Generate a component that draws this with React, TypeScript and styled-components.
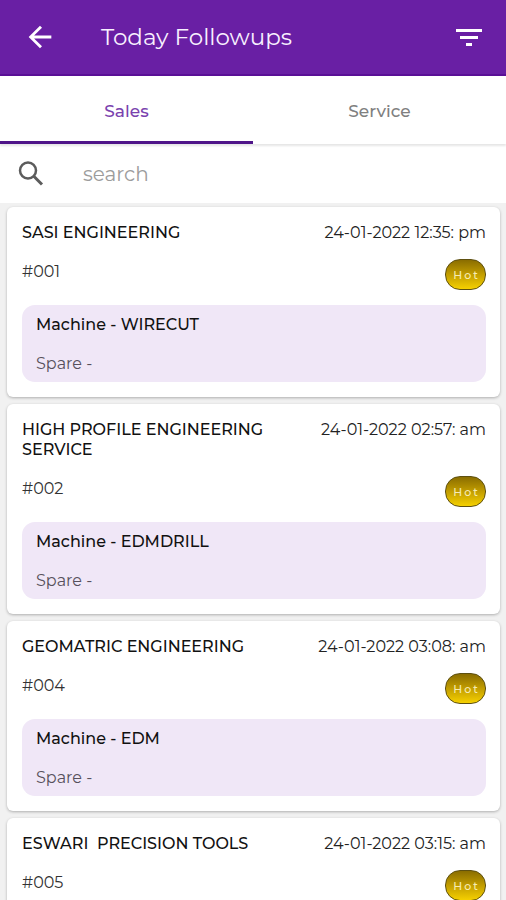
import React, { useState } from "react";
import styled, { createGlobalStyle } from "styled-components";

const GlobalStyle = createGlobalStyle`
  *, *::before, *::after { box-sizing: border-box; }
  body {
    margin: 0;
    background: #f1f1f1;
    font-family: Montserrat, Inter, "Liberation Sans", sans-serif;
    color: #111;
  }
  h1, h2, p, ul { margin: 0; padding: 0; }
  button, input { font: inherit; }
`;

const Screen = styled.div`
  display: flex;
  flex-direction: column;
  height: 100vh;
`;

const AppBar = styled.header`
  display: flex;
  flex: none;
  align-items: center;
  height: 76px;
  padding: 0 19px 0 22px;
  background: #691fa4;
  border-bottom: 2px solid #5a0f96;
`;

const IconButton = styled.button`
  display: flex;
  align-items: center;
  justify-content: center;
  width: 36px;
  height: 36px;
  padding: 0;
  border: 0;
  background: none;
  color: #fff;
  cursor: pointer;
`;

const Title = styled.h1`
  flex: 1;
  padding-left: 43px;
  font-size: 23px;
  font-weight: 400;
  line-height: 32px;
  color: #f8f0ff;
`;

const Tabs = styled.div`
  display: grid;
  flex: none;
  grid-template-columns: 1fr 1fr;
  height: 68px;
  background: #fff;
  box-shadow: 0 2px 2px #e6e6e6;
  z-index: 1;
`;

const Tab = styled.button<{ $active: boolean }>`
  padding: 4px 0 0;
  border: 0;
  border-bottom: 3px solid ${(p) => (p.$active ? "#4f1589" : "transparent")};
  background: none;
  font-size: 17px;
  font-weight: 500;
  color: ${(p) => (p.$active ? "#7a42ae" : "#808080")};
  cursor: pointer;
`;

const SearchBar = styled.label`
  display: flex;
  flex: none;
  align-items: center;
  gap: 37px;
  height: 59px;
  padding: 0 16px;
  background: #fff;
  color: #5c5c5c;
`;

const SearchInput = styled.input`
  flex: 1;
  min-width: 0;
  padding: 0;
  border: 0;
  outline: 0;
  background: none;
  font-size: 20px;
  color: #333;
  &::placeholder { color: #9c9c9c; opacity: 1; }
`;

const List = styled.ul`
  display: flex;
  flex: 1;
  flex-direction: column;
  gap: 7px;
  min-height: 0;
  padding: 4px 6px 4px 7px;
  overflow-y: auto;
  scrollbar-width: none;
  list-style: none;
`;

const Card = styled.li`
  flex: none;
  padding: 15px 14px 15px 15px;
  border-radius: 6px;
  background: #fff;
  box-shadow: 0 1px 3px rgba(0, 0, 0, 0.28);
`;

const CardHead = styled.div`
  display: flex;
  align-items: flex-start;
  justify-content: space-between;
  gap: 24px;
  padding-top: 1px;
  line-height: 20px;
`;

const Company = styled.h2`
  max-width: 260px;
  font-size: 16px;
  font-weight: 500;
  line-height: 20px;
  white-space: pre-wrap;
`;

const When = styled.time`
  flex: none;
  font-size: 16px;
  color: #222;
`;

const CardMeta = styled.div`
  display: flex;
  align-items: flex-start;
  justify-content: space-between;
  margin: 16px 0 15px;
`;

const Ticket = styled.p`
  font-size: 16px;
  line-height: 26px;
  color: #333;
`;

const Badge = styled.span`
  display: flex;
  align-items: center;
  justify-content: center;
  width: 41px;
  height: 31px;
  border: 1px solid #5e5010;
  border-radius: 15px;
  background: linear-gradient(#8a6d00, #c29d00 50%, #f5d000);
  font-size: 11px;
  font-weight: 500;
  letter-spacing: 2px;
  text-indent: 2px;
  color: #f6ebb4;
`;

const Details = styled.div`
  display: flex;
  flex-direction: column;
  gap: 19px;
  padding: 10px 14px 8px;
  border-radius: 13px;
  background: #f0e7f7;
  font-size: 16px;
  line-height: 20px;
`;

const Machine = styled.p`
  font-weight: 500;
`;

const Spare = styled.p`
  color: #57515c;
`;

const followups = [
  { company: "SASI ENGINEERING", when: "24-01-2022 12:35: pm", ticket: "#001", machine: "WIRECUT" },
  { company: "HIGH PROFILE ENGINEERING SERVICE", when: "24-01-2022 02:57: am", ticket: "#002", machine: "EDMDRILL" },
  { company: "GEOMATRIC ENGINEERING", when: "24-01-2022 03:08: am", ticket: "#004", machine: "EDM" },
  { company: "ESWARI  PRECISION TOOLS", when: "24-01-2022 03:15: am", ticket: "#005", machine: "" },
];

const BackIcon = () => (
  <svg width="34" height="34" viewBox="0 0 24 24" fill="currentColor" aria-hidden="true">
    <path d="M20 11H7.83l5.59-5.59L12 4l-8 8 8 8 1.41-1.41L7.83 13H20v-2z" />
  </svg>
);

const FilterIcon = () => (
  <svg width="34" height="34" viewBox="0 0 34 34" fill="currentColor" aria-hidden="true">
    <path d="M4 9h26v3H4zM8 16h18v3H8zM14 23h6v3h-6z" />
  </svg>
);

const SearchIcon = () => (
  <svg width="30" height="30" viewBox="0 0 30 30" fill="none" stroke="currentColor" aria-hidden="true">
    <circle cx="12" cy="11.5" r="8" strokeWidth="2.5" />
    <path d="M17.8 17.3L26 25.5" strokeWidth="3" />
  </svg>
);

export default function App() {
  const [tab, setTab] = useState("Sales");
  return (
    <Screen>
      <GlobalStyle />
      <AppBar>
        <IconButton aria-label="Back"><BackIcon /></IconButton>
        <Title>Today Followups</Title>
        <IconButton aria-label="Filter"><FilterIcon /></IconButton>
      </AppBar>
      <Tabs role="tablist">
        {["Sales", "Service"].map((name) => (
          <Tab key={name} role="tab" aria-selected={tab === name} $active={tab === name} onClick={() => setTab(name)}>
            {name}
          </Tab>
        ))}
      </Tabs>
      <SearchBar>
        <SearchIcon />
        <SearchInput type="text" placeholder="search" aria-label="search" />
      </SearchBar>
      <List>
        {followups.map((f) => (
          <Card key={f.ticket}>
            <CardHead>
              <Company>{f.company}</Company>
              <When>{f.when}</When>
            </CardHead>
            <CardMeta>
              <Ticket>{f.ticket}</Ticket>
              <Badge>Hot</Badge>
            </CardMeta>
            <Details>
              <Machine>Machine - {f.machine}</Machine>
              <Spare>Spare -</Spare>
            </Details>
          </Card>
        ))}
      </List>
    </Screen>
  );
}
